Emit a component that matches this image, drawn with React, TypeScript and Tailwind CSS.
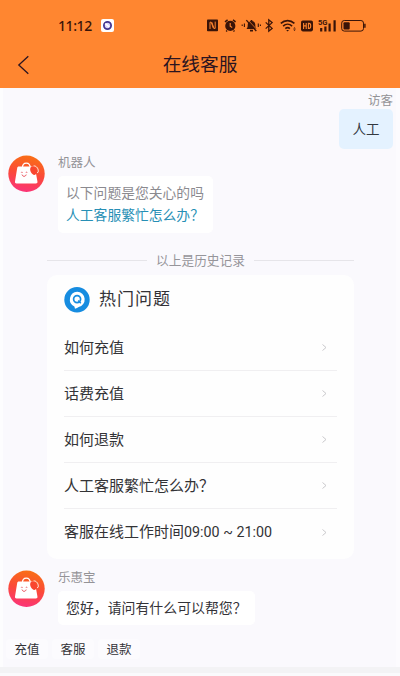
import type { ReactNode } from "react";

const QUESTIONS = [
  { title: "如何充值" },
  { title: "话费充值" },
  { title: "如何退款" },
  { title: "人工客服繁忙怎么办？" },
  { title: "客服在线工作时间", hours: "09:00 ~ 21:00" },
];

const SHORTCUTS = ["充值", "客服", "退款"];

function StatusBar() {
  return (
    <div className="flex h-[50px] items-center text-[#3a1408]">
      <span className="ml-[58px] w-[43px] font-['Noto_Sans',sans-serif] text-[14px] font-medium tracking-[-0.4px]">
        11:12
      </span>
      <svg className="h-[13px] w-[13px]" viewBox="0 0 13 13">
        <rect width="13" height="13" rx="2" fill="#fff" />
        <circle cx="6.5" cy="6.5" r="3.6" fill="#d9d4fb" stroke="#43358f" strokeWidth="1.8" />
        <path d="M4.2 4.6l4 3.2" stroke="#fff" strokeWidth="1.6" />
      </svg>
      <svg className="ml-[92px] h-5 w-[164px]" viewBox="0 0 164 20" fill="none" stroke="currentColor">
        {/* NFC */}
        <rect x="1" y="4.5" width="11" height="11.8" rx="0.8" fill="currentColor" stroke="none" />
        <path d="M4 14V7.2h1.2l2.2 6.2M9.2 6.6v6.8H8L5.8 7.2" stroke="#ff8630" />
        {/* Alarm */}
        <circle cx="24.3" cy="10.9" r="5.1" fill="currentColor" stroke="none" />
        <path d="M19 6.8l2.6-2M29.6 6.8l-2.6-2M21 15.5l-.8 1M27.6 15.5l.8 1" strokeWidth="1.5" />
        <path d="M24.2 8v3.3l2 1.2" stroke="#ff8630" strokeWidth="1.1" />
        {/* Muted bell */}
        <path d="M40.5 14c1.2-1.2 1.2-2.4 1.2-4.2 0-2.2 1.2-3.6 3-3.9v-.8h1.6v.8c1.8.3 3 1.7 3 3.9 0 1.8.2 3 1.3 4.2zM44 14.8h3v1.6h-3z" fill="currentColor" stroke="none" />
        <path d="M41.3 4.4l10 10.6" stroke="#ff8630" strokeWidth="0.8" />
        <path d="M40.3 5.1l10 10.9" strokeWidth="1.4" />
        <path d="M38.4 8.5v3.5M36.2 9.6v1.5M52.3 8.5v3.5M54.4 9.6v1.5" strokeWidth="1.1" />
        {/* Bluetooth */}
        <path d="M59.7 7.4l6.4 6-3.3 2.8V4.8l3.3 2.8-6.4 6" strokeWidth="1.3" />
        {/* Wi-Fi */}
        <path d="M74.8 8.4c3.9-3.7 9.7-3.7 13.6 0M77.1 11.1c2.6-2.4 6.4-2.4 9 0M79.3 13.6c1.4-1.2 3.2-1.2 4.6 0" strokeWidth="1.6" />
        <path d="M81.6 16.6l-1.4-1.6h2.8z" fill="currentColor" stroke="none" />
        <path d="M88.5 12.2l1.3 1.4h-2.6zM88.5 16l1.3-1.4h-2.6z" fill="currentColor" stroke="none" />
        {/* HD */}
        <rect x="95" y="5.4" width="12" height="11" rx="1.8" fill="currentColor" stroke="none" />
        <path d="M97.6 7.9v6M100.2 7.9v6M97.6 10.9h2.6M102.4 8.4v5h.6c2.3 0 2.3-5 0-5z" stroke="#ff8630" strokeWidth="1.1" />
        {/* Signal */}
        <path d="M115.2 13v3.4M119.4 11.5v4.9M123.6 8.5v7.9M128.6 5.3v11.1" strokeWidth="2.2" />
        <text x="112" y="10.2" fontSize="7.6" fontWeight="700" fill="currentColor" stroke="none">5G</text>
        {/* Battery */}
        <rect x="135.7" y="5.5" width="21.8" height="10.6" rx="2.6" />
        <rect x="137.5" y="7.2" width="6.2" height="7.2" rx="1" fill="currentColor" stroke="none" />
        <path d="M158.9 8.8v4" strokeWidth="1.4" />
      </svg>
    </div>
  );
}

function Header() {
  return (
    <header className="h-[88px] bg-[#ff8630]">
      <StatusBar />
      <div className="grid h-[27px] grid-cols-[80px_1fr_80px] items-center text-[#2b1420]">
        <svg className="ml-[17px] h-5 w-3" viewBox="0 0 12 20" fill="none" stroke="currentColor" strokeWidth="1.3">
          <path d="M11.3 1.2L1.8 10l9.5 8.8" />
        </svg>
        <h1 className="pt-[2px] text-center text-[18.7px] leading-[27px]">在线客服</h1>
      </div>
    </header>
  );
}

function Avatar() {
  return (
    <svg className="h-[37px] w-[37px] shrink-0" viewBox="0 0 37 37" fill="none">
      <defs>
        <linearGradient id="avatar" x1="0.6" y1="0" x2="0.4" y2="1">
          <stop offset="0" stopColor="#f96f16" />
          <stop offset="0.5" stopColor="#fb4a38" />
          <stop offset="1" stopColor="#fb3479" />
        </linearGradient>
      </defs>
      <circle cx="18.5" cy="18.8" r="18.2" fill="url(#avatar)" />
      <path d="M14.4 13c0-6.6 7.8-6.6 7.8 0" stroke="#fff" strokeWidth="1.2" />
      <path d="M10.8 11.6h13.4c2 0 2.6.9 3 2.3l2.2 12.3c.3 1.5-.3 2.2-1.6 2.2H8.6c-1.2 0-1.8-.8-1.6-2l2.2-13.3c.2-1 .7-1.5 1.6-1.5z" fill="#fff" />
      {/* Price tag on the bag's corner */}
      <path d="M22.3 13.2c.6-1.9 3.1-2.6 4.6-1.1l1.9 2.6.2 3.8-2.5 1.6c-3-1.1-4.9-4.1-4.2-6.9z" fill="#f9462f" />
      <path d="M25.6 10.9c2.7-.2 4.9 2.6 4.7 5.6l-1 1.6" stroke="#fff" strokeWidth="0.9" />
      <path d="M13.2 17.6c.4-.6 1-.6 1.4 0M17.9 17.6c.4-.6 1-.6 1.4 0M14 19.6c.8 2.3 3.4 2.3 4.2 0" stroke="#e8434f" />
    </svg>
  );
}

function AgentMessage({ name, children }: { name: string; children: ReactNode }) {
  return (
    <div className="flex items-start gap-[13px] pl-2">
      <Avatar />
      <div className="flex flex-col items-start">
        <span className="pt-px text-[12.5px] leading-[14px] text-[#949397]">{name}</span>
        {children}
      </div>
    </div>
  );
}

function HotQuestions() {
  return (
    <section className="mt-[7px] ml-[47px] h-[284px] w-[307px] rounded-[10px] bg-[#fefefe] px-[17px] pt-[11px]">
      <div className="flex h-[27px] items-center gap-[9px]">
        <svg className="h-[26px] w-[26px]" viewBox="0 0 26 26">
          <circle cx="13" cy="12.8" r="12.7" fill="#168ce0" />
          <path d="M13.2 4.7a7.7 7.7 0 0 1 1.5 15.2c-1.1.9-2.2 1.5-3.7 1.8l-.6-2.3A7.7 7.7 0 0 1 13.2 4.7z" fill="#fff" />
          <circle cx="13.1" cy="12.1" r="3.5" fill="none" stroke="#168ce0" strokeWidth="1.7" />
          <path d="M14.2 13.4l2.6 2.8" stroke="#168ce0" strokeWidth="1.5" />
        </svg>
        <h2 className="pt-px text-[17px] tracking-[1px] text-[#333237]">热门问题</h2>
      </div>
      <ul className="mt-3 divide-y divide-[#f0eff1]">
        {QUESTIONS.map(({ title, hours }) => (
          <li key={title} className="flex h-[46px] items-center justify-between pr-[10px] text-[15px] text-[#333336]">
            <span className="leading-[22px]">
              {title}
              {hours && <span className="text-[14.3px]">{hours}</span>}
            </span>
            <svg className="h-[7px] w-[5px]" viewBox="0 0 5 7" fill="none" stroke="#c4c3c7" strokeWidth="0.9">
              <path d="M0.5 0.5L4 3.5 0.5 6.5" />
            </svg>
          </li>
        ))}
      </ul>
    </section>
  );
}

export default function App() {
  return (
    <div className="flex h-[676px] w-[400px] flex-col overflow-hidden bg-[#faf9fd] font-[Roboto,'Noto_Sans_CJK_SC',sans-serif]">
      <Header />
      <main className="flex h-[579px] flex-col bg-[linear-gradient(to_right,#fdfdfe_3px,#faf9fd_3px,#faf9fd_396px,#fcfbfe_396px)]">
        <div className="flex flex-col items-end pt-[6px] pr-[7px]">
          <span className="text-[12.5px] leading-[14px] text-[#949397]">访客</span>
          <p className="mt-px flex h-10 w-[54px] items-center justify-center rounded-[5px] bg-[#e4f2ff] text-[13.5px] text-[#33393f]">
            人工
          </p>
        </div>

        <div className="mt-[6px]">
          <AgentMessage name="机器人">
            <div className="mt-[6px] h-[57px] w-[155px] rounded-[5px] bg-white px-2 pt-[6px] text-[13.8px] leading-[22px]">
              <p className="text-[#8b8a8f]">以下问题是您关心的吗</p>
              <p className="text-[#278fb5]">人工客服繁忙怎么办？</p>
            </div>
          </AgentMessage>
        </div>

        <div className="mt-[19px] flex h-4 items-center gap-[9px] pr-[46px] pl-[47px] text-[12.7px] text-[#96959a]">
          <span className="h-px flex-1 bg-[#e6e5e9]" />
          <span className="pt-[2px]">以上是历史记录</span>
          <span className="h-px flex-1 bg-[#e6e5e9]" />
        </div>

        <HotQuestions />

        <div className="mt-[11px]">
          <AgentMessage name="乐惠宝">
            <p className="mt-[6px] flex h-[34px] w-[197px] items-center rounded-[5px] bg-white pl-2 text-[13.9px] text-[#333237]">
              您好，请问有什么可以帮您？
            </p>
          </AgentMessage>
        </div>

        <div className="mt-[14px] flex gap-1 pl-[6px]">
          {SHORTCUTS.map((label) => (
            <button key={label} className="h-5 w-[42px] rounded-[4px] bg-[#fcfbfe] pt-px text-[12.5px] leading-5 text-[#333237]">
              {label}
            </button>
          ))}
        </div>
      </main>
      <div className="h-[6px] bg-[#f3f3f5]" />
      <div className="h-[3px] bg-[#fafafc]" />
    </div>
  );
}
